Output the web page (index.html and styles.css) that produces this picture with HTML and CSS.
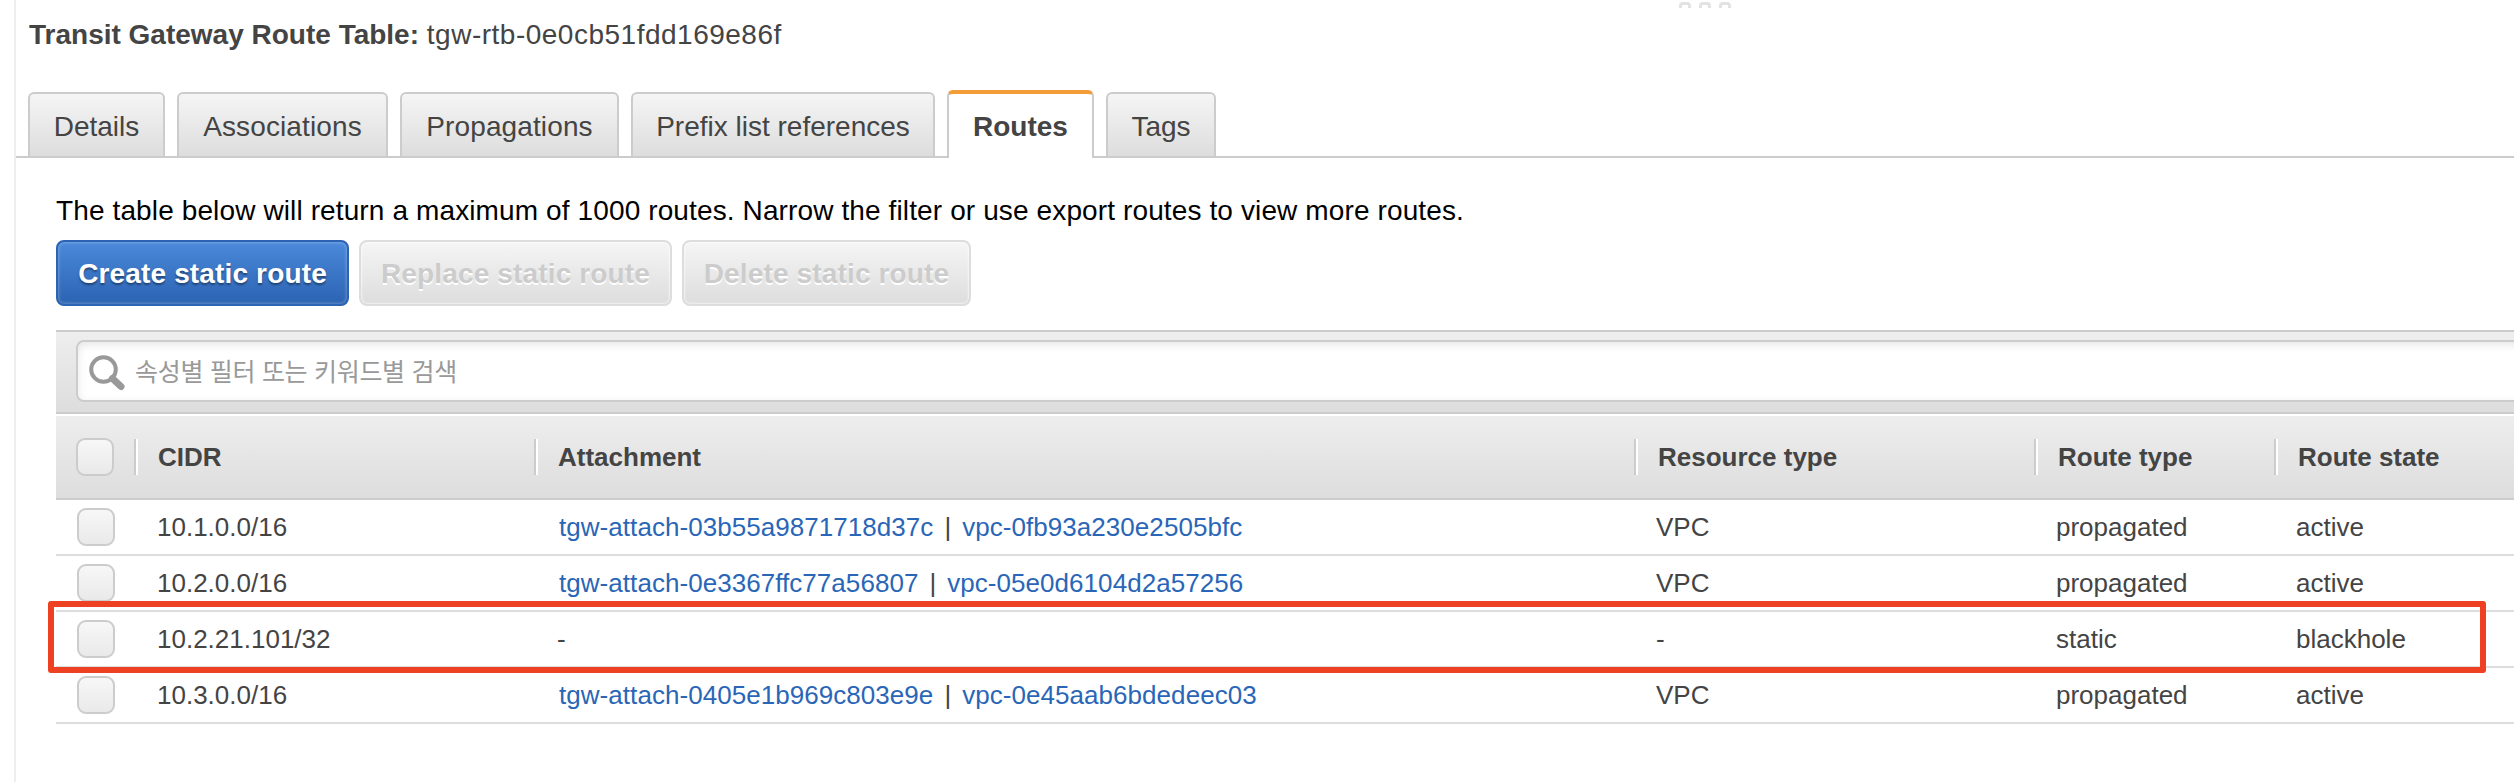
FILE: index.html
```
<!DOCTYPE html>
<html lang="en">
<head>
<meta charset="utf-8">
<title>Transit Gateway Route Table</title>
<link rel="stylesheet" href="styles.css">
</head>
<body>
<div class="grip"><i></i><i></i><i></i></div>
<main class="panel">
  <h1 class="title"><b>Transit Gateway Route Table:</b> <span class="title-id">tgw-rtb-0e0cb51fdd169e86f</span></h1>
  <nav class="tabs">
    <a class="tab tab-details"><span>Details</span></a>
    <a class="tab tab-associations"><span>Associations</span></a>
    <a class="tab tab-propagations"><span>Propagations</span></a>
    <a class="tab tab-prefix"><span>Prefix list references</span></a>
    <a class="tab tab-routes active"><span>Routes</span></a>
    <a class="tab tab-tags"><span>Tags</span></a>
  </nav>
  <section class="content">
    <p class="note"><span>The table below will return a maximum of 1000 routes. Narrow the filter or use export routes to view more routes.</span></p>
    <div class="actions">
      <button class="btn primary btn-create"><span>Create static route</span></button>
      <button class="btn btn-replace" disabled><span>Replace static route</span></button>
      <button class="btn btn-delete" disabled><span>Delete static route</span></button>
    </div>
    <div class="filter">
      <div class="search">
        <svg class="glass" width="36" height="36" viewBox="0 0 36 36" fill="none" stroke="#999"><circle cx="14.5" cy="14.5" r="12.3" stroke-width="4"/><path d="M23.5 23.5 32 31.5" stroke-width="7" stroke-linecap="round"/></svg>
        <span class="placeholder" lang="ko">속성별 필터 또는 키워드별 검색</span>
      </div>
    </div>
    <div class="table">
      <div class="row head">
        <div class="cell"><i class="check"></i></div>
        <div class="cell"><span>CIDR</span></div>
        <div class="cell"><span>Attachment</span></div>
        <div class="cell"><span>Resource type</span></div>
        <div class="cell"><span>Route type</span></div>
        <div class="cell"><span>Route state</span></div>
      </div>
      <div class="row">
        <div class="cell"><i class="check"></i></div>
        <div class="cell">10.1.0.0/16</div>
        <div class="cell links"><a>tgw-attach-03b55a9871718d37c</a><span class="bar">|</span><a>vpc-0fb93a230e2505bfc</a></div>
        <div class="cell">VPC</div>
        <div class="cell">propagated</div>
        <div class="cell">active</div>
      </div>
      <div class="row">
        <div class="cell"><i class="check"></i></div>
        <div class="cell">10.2.0.0/16</div>
        <div class="cell links"><a>tgw-attach-0e3367ffc77a56807</a><span class="bar">|</span><a>vpc-05e0d6104d2a57256</a></div>
        <div class="cell">VPC</div>
        <div class="cell">propagated</div>
        <div class="cell">active</div>
      </div>
      <div class="row marked">
        <div class="cell"><i class="check"></i></div>
        <div class="cell">10.2.21.101/32</div>
        <div class="cell">-</div>
        <div class="cell">-</div>
        <div class="cell">static</div>
        <div class="cell">blackhole</div>
      </div>
      <div class="row">
        <div class="cell"><i class="check"></i></div>
        <div class="cell">10.3.0.0/16</div>
        <div class="cell links"><a>tgw-attach-0405e1b969c803e9e</a><span class="bar">|</span><a>vpc-0e45aab6bdedeec03</a></div>
        <div class="cell">VPC</div>
        <div class="cell">propagated</div>
        <div class="cell">active</div>
      </div>
    </div>
  </section>
</main>
</body>
</html>
```
FILE: styles.css
```
*, *::before, *::after { box-sizing: border-box; }
body {
  margin: 0;
  height: 782px;
  overflow: hidden;
  background: #fff;
  color: #444;
  font: 26px/32px "Liberation Sans", Arial, "Noto Sans CJK KR", sans-serif;
  white-space: nowrap;
}
/* Splitter handle peeking over the top edge */
.grip { position: absolute; top: 2px; left: 1679px; display: flex; gap: 8px; }
.grip i { width: 12px; height: 6px; border: 3px solid #e2e2e2; border-bottom: 0; border-radius: 4px 4px 0 0; }
.panel { margin-left: 14px; height: 782px; border-left: 2px solid #eee; }
.title { margin: 0; padding: 19px 0 0 13px; height: 90px; font-size: 28px; line-height: 32px; font-weight: 400; }
.title-id { letter-spacing: .5px; }
.tabs { display: flex; align-items: flex-end; gap: 12px; height: 68px; padding-left: 12px; border-bottom: 2px solid #ccc; font-size: 28px; }
.tab { display: flex; justify-content: center; height: 64px; padding-top: 17px; border: 2px solid #ccc; border-bottom: 0; border-radius: 6px 6px 0 0; background: linear-gradient(#f5f5f5, #ddd); }
.tab-details { width: 137px; }
.tab-associations { width: 211px; letter-spacing: .12px; }
.tab-propagations { width: 219px; letter-spacing: .12px; }
.tab-prefix { width: 304px; }
.tab-routes { width: 147px; }
.tab-tags { width: 110px; }
.tab.active { position: relative; height: 68px; margin-bottom: -2px; padding-top: 17px; border-top: 4px solid #f29d38; background: #fff; font-weight: 700; }
.content { padding: 37px 0 0 40px; }
.note { margin: 0; height: 45px; font-size: 28px; letter-spacing: .12px; color: #000; }
.actions { display: flex; gap: 10px; height: 66px; }
.btn { height: 66px; padding: 1px 0 0; border: 2px solid #ddd; border-radius: 8px; background: linear-gradient(#f5f5f5, #ddd); box-shadow: inset 0 0 2px 1px rgba(255,255,255,.6); color: #ccc; text-shadow: 0 2px 0 #fff; font: 700 28px/32px "Liberation Sans", Arial, sans-serif; letter-spacing: .15px; }
.btn.primary { border-color: #2c63b3; background: linear-gradient(#4b89da, #2b63b2); box-shadow: inset 0 0 3px 1px rgba(255,255,255,.25); color: #fff; text-shadow: 0 2px 2px rgba(0,0,0,.4); }
.btn-create { width: 293px; }
.btn-replace { width: 313px; }
.btn-delete { width: 289px; }
.filter { height: 84px; margin-top: 24px; padding: 8px 0 0 20px; border: solid #ccc; border-width: 2px 0; background: linear-gradient(#eee, #ddd); overflow: hidden; }
.search { display: flex; align-items: center; height: 62px; margin-right: -16px; padding-left: 11px; border: 2px solid #ccc; border-radius: 8px; background: #fff; box-shadow: inset 0 3px 8px rgba(0,0,0,.1); color: #999; }
.glass { margin-top: 4px; }
.placeholder { margin: -3px 0 0 10px; font: 25px/32px "Noto Sans CJK KR", sans-serif; letter-spacing: -.3px; }
.row { display: grid; grid-template-columns: 101px 400px 1099px 400px 240px 1fr; height: 56px; border-bottom: 2px solid #ddd; }
.cell { display: flex; align-items: center; }
.check { width: 38px; height: 38px; margin-left: 21px; border: 2px solid #ccc; border-radius: 9px; background: linear-gradient(#f7f7f7, #e9e9e9); }
.links { padding-left: 2px; letter-spacing: .05px; }
.cell a { color: #2a66b7; }
.bar { margin: 0 11px; }
.row.head { grid-template-columns: 78px 400px 1100px 400px 240px 1fr; height: 86px; padding-top: 2px; border-bottom-color: #ccc; background: linear-gradient(#eee, #ddd) padding-box; box-shadow: inset 0 2px #fff; font-weight: 700; }
.head .check { margin-left: 20px; }
.head .cell + .cell::before { content: ""; width: 4px; height: 36px; margin-right: 20px; border-left: 2px solid #ccc; border-right: 2px solid #fff; }
/* Highlight frame around the blackhole route */
.marked { position: relative; }
.marked::after { content: ""; position: absolute; left: -8px; top: -11px; width: 2438px; height: 72px; border: 6px solid #ee4023; border-radius: 3px; }
```
